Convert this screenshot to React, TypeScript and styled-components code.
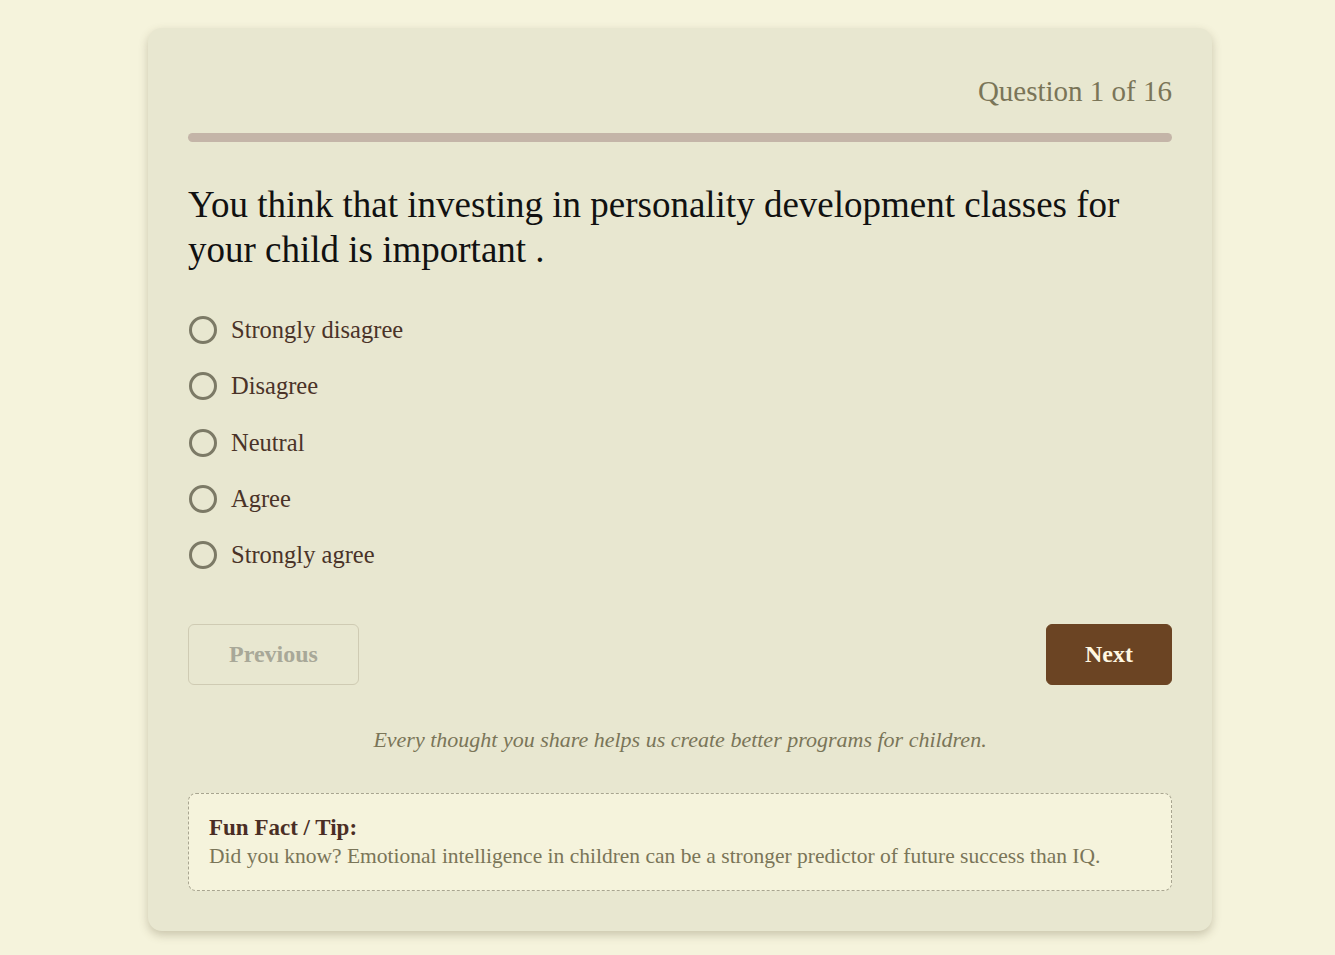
import React, { useState } from "react";
import styled, { createGlobalStyle } from "styled-components";

const Global = createGlobalStyle`
  html, body { margin: 0; padding: 0; }
  body {
    background: #f5f3dc;
    font-family: Georgia, "Liberation Serif", "DejaVu Serif", serif;
  }
`;

const Page = styled.div`
  display: flex;
  justify-content: center;
  padding: 28px 0 24px 25px;
`;

const Card = styled.div`
  width: 984px;
  padding: 40px 40px 40px;
  background: #e8e7d0;
  border-radius: 14px;
  box-shadow: 0 4px 10px rgba(90, 80, 50, 0.28);
`;

const Counter = styled.div`
  text-align: right;
  font-size: 29px;
  color: #7a7558;
  line-height: 44px;
  margin-top: 1px;
`;

const Track = styled.div`
  margin-top: 20px;
  height: 9px;
  border-radius: 5px;
  background: #c4b5a8;
  overflow: hidden;
`;

const Fill = styled.div`
  height: 100%;
  background: #6b4423;
`;

const Question = styled.h2`
  margin: 40px 0 0;
  font-size: 37px;
  font-weight: normal;
  line-height: 45px;
  color: #111;
`;

const Options = styled.div`
  margin-top: 37px;
  display: flex;
  flex-direction: column;
  gap: 14.25px;
`;

const Option = styled.label`
  display: flex;
  align-items: center;
  gap: 14px;
  height: 42px;
  font-size: 24.5px;
  color: #4a3328;
  cursor: pointer;
`;

const Radio = styled.span<{ $checked: boolean }>`
  box-sizing: border-box;
  width: 28px;
  height: 28px;
  border-radius: 50%;
  border: 3px solid #7c7a66;
  margin-left: 1px;
  display: flex;
  align-items: center;
  justify-content: center;
  &::after {
    content: "";
    width: 12px;
    height: 12px;
    border-radius: 50%;
    background: ${(p) => (p.$checked ? "#6b4423" : "transparent")};
  }
`;

const Nav = styled.div`
  margin-top: 48px;
  display: flex;
  justify-content: space-between;
`;

const Button = styled.button<{ $primary?: boolean }>`
  height: 61px;
  padding: 0 ${(p) => (p.$primary ? "38px" : "40px")};
  border-radius: 6px;
  font-family: inherit;
  font-size: 24px;
  font-weight: bold;
  border: 1px solid ${(p) => (p.$primary ? "#6b4423" : "#cfcbb3")};
  background: ${(p) => (p.$primary ? "#6b4423" : "transparent")};
  color: ${(p) => (p.$primary ? "#fff8e2" : "#a8a898")};
  cursor: ${(p) => (p.disabled ? "default" : "pointer")};
`;

const Encourage = styled.p`
  margin: 40px 0 0;
  text-align: center;
  font-style: italic;
  font-size: 22px;
  color: #7a7558;
  line-height: 30px;
`;

const Tip = styled.div`
  margin-top: 38px;
  padding: 20px 20px 20px;
  border: 1px dashed #a8a590;
  border-radius: 8px;
  background: #f5f3dc;
`;

const TipTitle = styled.div`
  font-weight: bold;
  font-size: 23px;
  color: #4a2e25;
  line-height: 28px;
`;

const TipText = styled.div`
  font-size: 21.5px;
  color: #7a7558;
  line-height: 28px;
`;

const choices = ["Strongly disagree", "Disagree", "Neutral", "Agree", "Strongly agree"];

export default function App() {
  const [sel, setSel] = useState<number | null>(null);
  return (
    <>
      <Global />
      <Page>
        <Card>
          <Counter>Question 1 of 16</Counter>
          <Track>
            <Fill style={{ width: "0%" }} />
          </Track>
          <Question>
            You think that investing in personality development classes for your child is important .
          </Question>
          <Options>
            {choices.map((c, i) => (
              <Option key={c} onClick={() => setSel(i)}>
                <Radio $checked={sel === i} />
                {c}
              </Option>
            ))}
          </Options>
          <Nav>
            <Button disabled>Previous</Button>
            <Button $primary>Next</Button>
          </Nav>
          <Encourage>Every thought you share helps us create better programs for children.</Encourage>
          <Tip>
            <TipTitle>Fun Fact / Tip:</TipTitle>
            <TipText>
              Did you know? Emotional intelligence in children can be a stronger predictor of future success than IQ.
            </TipText>
          </Tip>
        </Card>
      </Page>
    </>
  );
}
